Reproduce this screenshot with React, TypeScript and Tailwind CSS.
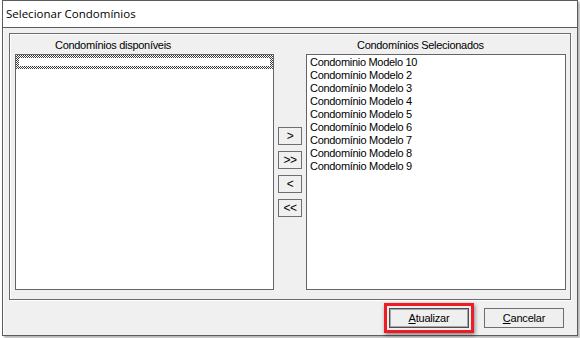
export default function App() {
  const items = [
    "Condominio Modelo 10",
    "Condomínio Modelo 2",
    "Condomínio Modelo 3",
    "Condomínio Modelo 4",
    "Condomínio Modelo 5",
    "Condomínio Modelo 6",
    "Condomínio Modelo 7",
    "Condomínio Modelo 8",
    "Condomínio Modelo 9",
  ];
  const arrows = [">", ">>", "<", "<<"];
  return (
    <div className="w-[580px] h-[338px] bg-white overflow-hidden font-['Liberation_Sans',Arial,sans-serif] text-black">
      <div className="ml-[2px] w-[576px] h-[336px] border border-[#5c5c5c] flex flex-col bg-[#f0f0f0] shadow-[2px_2px_2px_rgba(0,0,0,0.3)]">
        <div className="h-[27px] shrink-0 bg-white border-b border-[#5c5c5c] pl-[3px] flex items-center font-['Open_Sans',sans-serif] text-[11.5px] leading-none">
          Selecionar Condomínios
        </div>
        <div className="flex-1 flex flex-col border-l border-white">
          <div className="mt-[5px] ml-[5px] w-[562px] h-[267px] border border-[#6b6b6b] shadow-[inset_1px_1px_0_#fff,1px_1px_0_#fff] flex flex-col">
            <div className="h-[20px] flex text-[11px] tracking-[-0.3px] leading-[13px] pt-[5px]">
              <div className="w-[347px] pl-[45px]">Condomínios disponíveis</div>
              <div>Condomínios Selecionados</div>
            </div>
            <div className="h-[236px] flex pl-[5px] gap-[4px]">
              <div className="w-[259px] h-full border border-[#646464] bg-white">
                <div className="h-[14px] p-[3px] bg-[image:repeating-conic-gradient(#3c3c3c_0%_25%,#ffffff_0%_50%)] bg-[length:2px_2px]">
                  <div className="h-full bg-white" />
                </div>
              </div>
              <div className="w-[24px] flex flex-col justify-center gap-[6px]">
                {arrows.map((a) => (
                  <div
                    key={a}
                    className="h-[18px] w-[24px] border border-[#6e6e6e] bg-[#f0f0f0] flex items-center justify-center text-[12px] leading-none tracking-[-0.5px]"
                  >
                    {a}
                  </div>
                ))}
              </div>
              <div className="w-[260px] h-full border border-[#646464] bg-white pt-[1px] pl-[3px] text-[11px] tracking-[-0.3px] leading-[13px]">
                {items.map((it) => (
                  <div key={it} className="h-[13px] whitespace-nowrap">
                    {it}
                  </div>
                ))}
              </div>
            </div>
          </div>
          <div className="mt-[3px] flex items-center justify-end pr-[13px] gap-[10px] text-[11px] tracking-[-0.2px]">
            <div className="border-[3px] border-[#ee1c24] p-[2px] shadow-[1px_2px_4px_rgba(0,0,0,0.45)]">
              <div className="w-[80px] h-[20px] border border-[#4e4e4e] shadow-[inset_0_0_0_1px_#a8a8a8] bg-[#efefef] flex items-center justify-center leading-none">
                <span className="underline">A</span>tualizar
              </div>
            </div>
            <div className="w-[80px] h-[20px] border border-[#6e6e6e] bg-[#efefef] flex items-center justify-center leading-none">
              <span className="underline">C</span>ancelar
            </div>
          </div>
        </div>
      </div>
    </div>
  );
}
